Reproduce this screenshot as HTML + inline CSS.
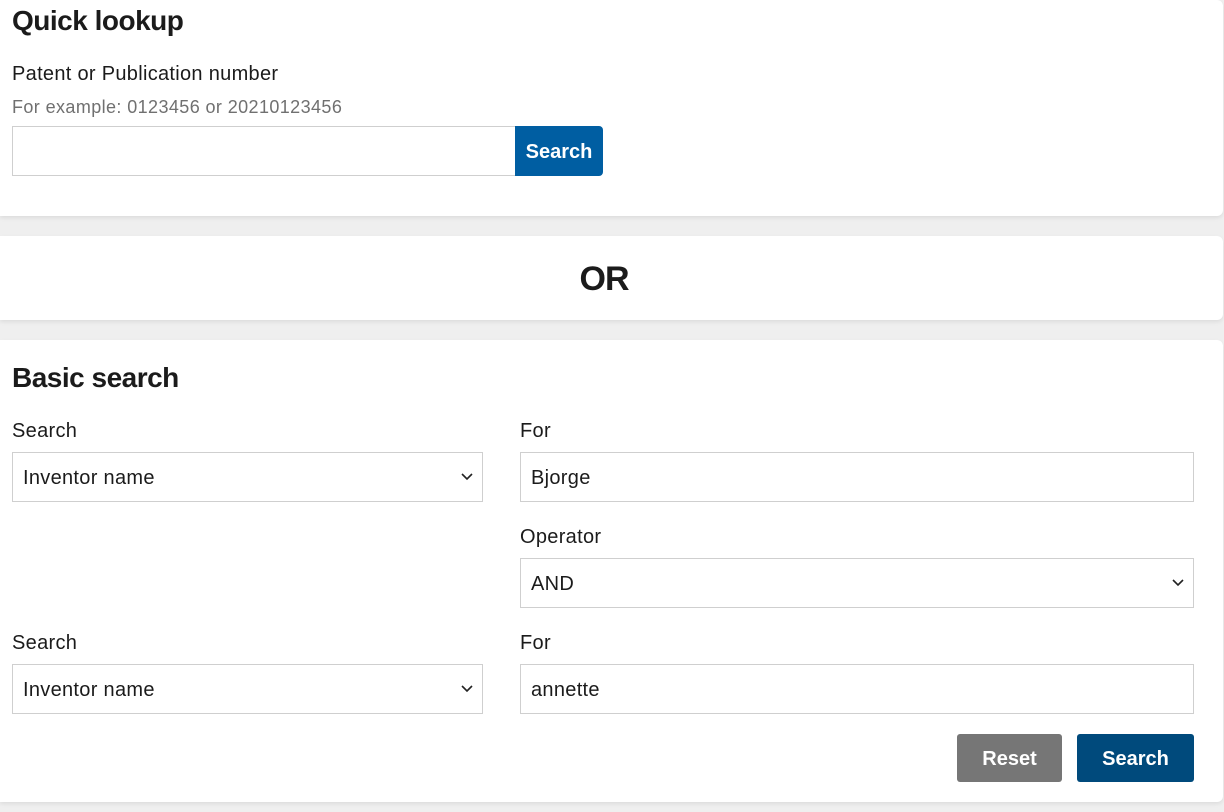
<!DOCTYPE html>
<html><head><style>
body{margin:0;width:1224px;height:812px;background:#efefef;font-family:"Liberation Sans",sans-serif;color:#1b1b1b;position:relative;overflow:hidden}
.card{position:absolute;left:0;width:1223px;background:#fff;border-radius:0 6px 6px 0;box-shadow:0 2px 4px rgba(0,0,0,.08)}
.a{position:absolute;white-space:nowrap}
.box{position:absolute;border:1px solid #cfcfcf;background:#fff;box-sizing:border-box;height:50px;font-size:20px;letter-spacing:0.3px;line-height:50px;padding-left:10px}
.chev{position:absolute;right:9px;top:20px}
.lbl{font-size:20px;letter-spacing:0.3px}
.btn{position:absolute;color:#fff;font-weight:bold;font-size:20px;text-align:center;border-radius:3px}
</style></head><body>
<div class="card" style="top:0;height:216px"></div>
<div class="card" style="top:236px;height:84px"></div>
<div class="card" style="top:340px;height:462px"></div>

<div class="a" style="left:12px;top:5px;font-size:28px;font-weight:bold;letter-spacing:-0.5px">Quick lookup</div>
<div class="a lbl" style="left:12px;top:63px">Patent or Publication number</div>
<div class="a" style="left:12px;top:97px;font-size:18px;letter-spacing:0.4px;color:#707070">For example: 0123456 or 20210123456</div>
<div class="box" style="left:12px;top:126px;width:505px"></div>
<div class="btn" style="left:515px;top:126px;width:88px;height:50px;line-height:52px;background:#005ea2;border-radius:0 4px 4px 0">Search</div>

<div class="a" style="left:0;width:1208px;text-align:center;top:260px;font-size:34px;font-weight:bold;letter-spacing:-1px">OR</div>

<div class="a" style="left:12px;top:362px;font-size:28px;font-weight:bold;letter-spacing:-0.5px">Basic search</div>
<div class="a lbl" style="left:12px;top:420px">Search</div>
<div class="a lbl" style="left:520px;top:420px">For</div>
<div class="box" style="left:12px;top:452px;width:471px">Inventor name<svg class="chev" width="12" height="8" viewBox="0 0 12 8"><path d="M1 1l5 5 5-5" fill="none" stroke="#222" stroke-width="1.6"/></svg></div>
<div class="box" style="left:520px;top:452px;width:674px">Bjorge</div>
<div class="a lbl" style="left:520px;top:526px">Operator</div>
<div class="box" style="left:520px;top:558px;width:674px">AND<svg class="chev" width="12" height="8" viewBox="0 0 12 8"><path d="M1 1l5 5 5-5" fill="none" stroke="#222" stroke-width="1.6"/></svg></div>
<div class="a lbl" style="left:12px;top:632px">Search</div>
<div class="a lbl" style="left:520px;top:632px">For</div>
<div class="box" style="left:12px;top:664px;width:471px">Inventor name<svg class="chev" width="12" height="8" viewBox="0 0 12 8"><path d="M1 1l5 5 5-5" fill="none" stroke="#222" stroke-width="1.6"/></svg></div>
<div class="box" style="left:520px;top:664px;width:674px">annette</div>
<div class="btn" style="left:957px;top:734px;width:105px;height:48px;line-height:50px;background:#767676">Reset</div>
<div class="btn" style="left:1077px;top:734px;width:117px;height:48px;line-height:50px;background:#004a7c">Search</div>
</body></html>
